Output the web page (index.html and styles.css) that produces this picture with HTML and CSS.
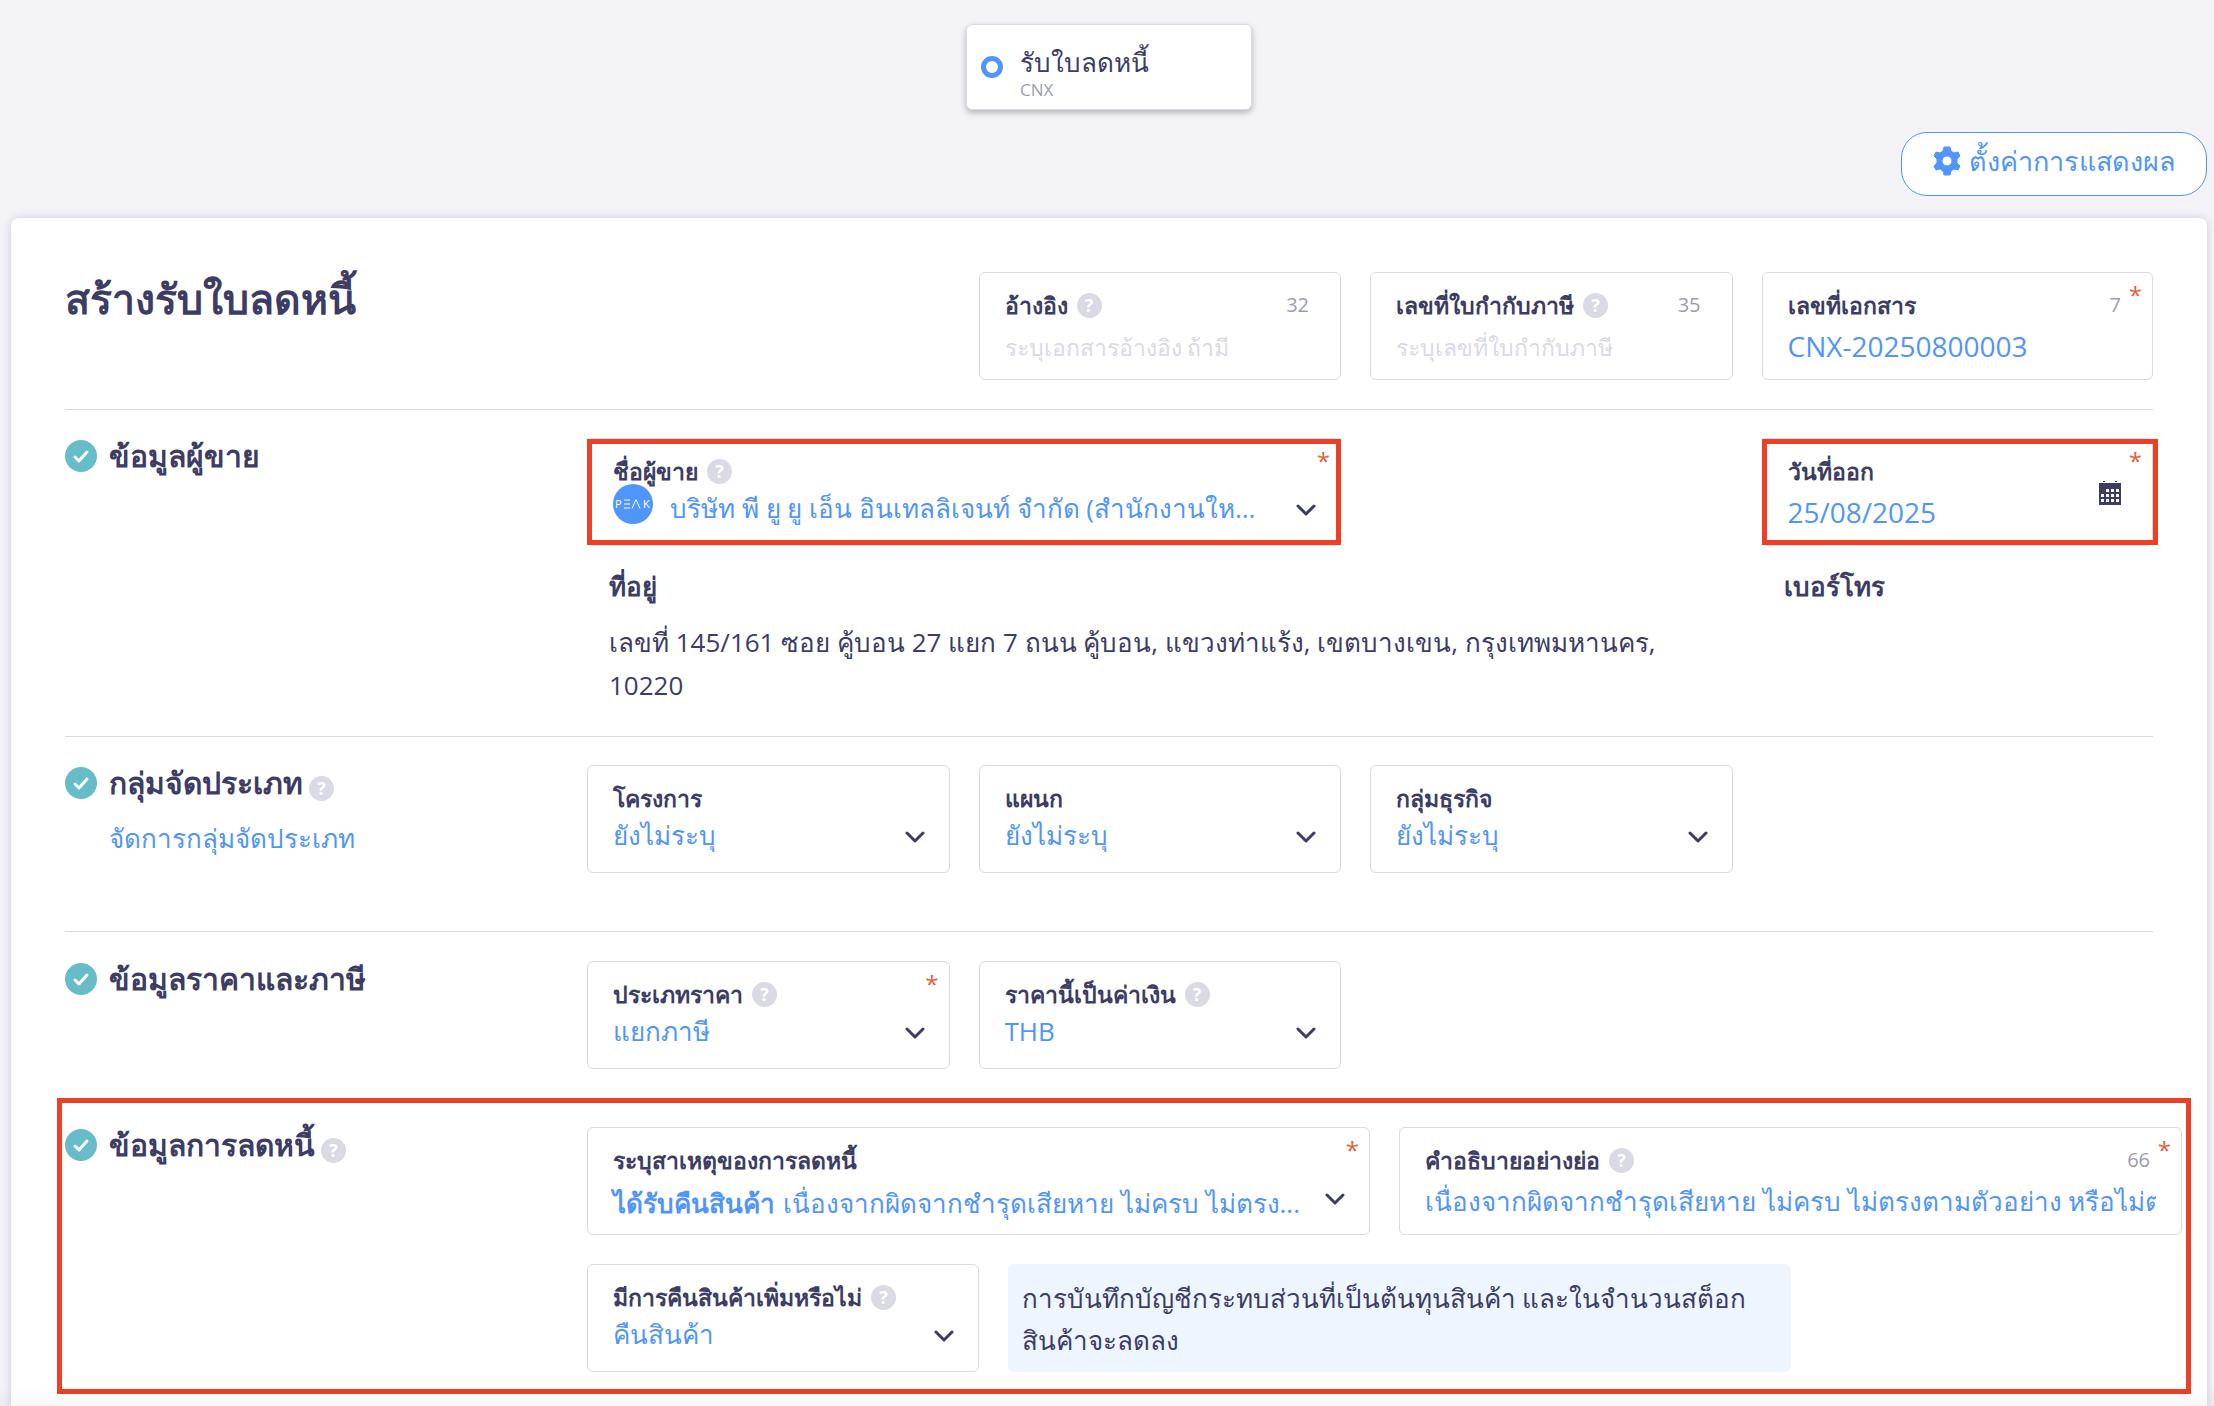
FILE: index.html
```html
<!DOCTYPE html>
<html lang="th">
<head>
  <meta charset="UTF-8" />
  <meta name="viewport" content="width=device-width, initial-scale=1.0" />
  <title>สร้างรับใบลดหนี้</title>
  <link rel="stylesheet" href="styles.css">
</head>
<body>
  <!-- shared icons -->
  <svg class="sprite" aria-hidden="true">
    <symbol id="chevron" viewBox="0 0 20 12"><path d="M2 2 L10 10 L18 2" fill="none" stroke="currentColor" stroke-width="3" stroke-linecap="round" stroke-linejoin="round"/></symbol>
    <symbol id="check" viewBox="0 0 32 32"><circle cx="16" cy="16" r="16" fill="#66bcc9"/><path d="M10 17 L14 21 L22 12" fill="none" stroke="#fff" stroke-width="3" stroke-linecap="round" stroke-linejoin="round"/></symbol>
  </svg>

  <header class="flow">
    <div class="flow-card">
      <span class="flow-dot"></span>
      <div class="flow-text">
        <div class="flow-name">รับใบลดหนี้</div>
        <div class="flow-code">CNX</div>
      </div>
    </div>
  </header>

  <div class="toolbar">
    <button type="button" class="btn-setting">
      <svg width="28" height="30" viewBox="0 0 28 30"><path fill="currentColor" stroke="currentColor" stroke-linejoin="round" fill-rule="evenodd" d="M11 1h6l1 4 3 2 4-1 2 4-3 3v4l3 3-2 4-4-1-3 2-1 4h-6l-1-4-3-2-4 1-2-4 3-3v-4l-3-3 2-4 4 1 3-2zM14 10a5 5 0 1 0 0 10a5 5 0 1 0 0-10z"/></svg>
      <span>ตั้งค่าการแสดงผล</span>
    </button>
  </div>

  <main class="panel">
    <section class="row">
      <h1 class="title">สร้างรับใบลดหนี้</h1>
      <div class="field">
        <div class="field-head"><label for="ref">อ้างอิง</label><button type="button" class="help">?</button><span class="count">32</span></div>
        <input type="text" id="ref" placeholder="ระบุเอกสารอ้างอิง ถ้ามี" />
      </div>
      <div class="field">
        <div class="field-head"><label for="tax">เลขที่ใบกำกับภาษี</label><button type="button" class="help">?</button><span class="count">35</span></div>
        <input type="text" id="tax" placeholder="ระบุเลขที่ใบกำกับภาษี" />
      </div>
      <div class="field last">
        <div class="field-head"><label for="doc">เลขที่เอกสาร</label><span class="count">7</span></div>
        <input type="text" id="doc" class="latin" value="CNX-20250800003" />
        <span class="star">*</span>
      </div>
    </section>

    <section class="row">
      <h2><svg class="check"><use href="#check"/></svg>ข้อมูลผู้ขาย</h2>
      <div class="field wide marked">
        <div class="field-head"><label for="seller">ชื่อผู้ขาย</label><button type="button" class="help">?</button></div>
        <div class="value-line seller">
          <svg class="logo" viewBox="0 0 40 40"><circle cx="20" cy="20" r="20" fill="#5096fa"/><text x="2" y="24" class="logo-text">P</text><path d="M11 16h6M11 20h6M11 24h6M19 24.500l4-9l4 9" fill="none" stroke="#fff"/><text x="30" y="24" class="logo-text">K</text></svg>
          <select id="seller"><option>บริษัท พี ยู ยู เอ็น อินเทลลิเจนท์ จำกัด (สำนักงานให...</option></select>
        </div>
        <svg class="chevron"><use href="#chevron"/></svg>
        <span class="star">*</span>
      </div>
      <div class="field date marked last">
        <div class="field-head"><label for="issued">วันที่ออก</label></div>
        <input type="text" id="issued" class="latin" value="25/08/2025" />
        <svg class="calendar" viewBox="0 0 22 24"><path fill="currentColor" fill-rule="evenodd" d="M4 0h2v1h-2zM16 0h2v1h-2zM0 2h22v22h-22zM7 8h3v3h-3zM12 8h3v3h-3zM17 8h3v3h-3zM2 13h3v3h-3zM7 13h3v3h-3zM12 13h3v3h-3zM17 13h3v3h-3zM2 18h3v3h-3zM7 18h3v3h-3zM12 18h3v3h-3zM17 18h3v3h-3z"/></svg>
        <span class="star">*</span>
      </div>
      <div class="info address">
        <h3>ที่อยู่</h3>
        <p>เลขที่ 145/161 ซอย คู้บอน 27 แยก 7 ถนน คู้บอน, แขวงท่าแร้ง, เขตบางเขน, กรุงเทพมหานคร,<br>10220</p>
      </div>
      <div class="info">
        <h3>เบอร์โทร</h3>
      </div>
    </section>

    <section class="row spaced">
      <div>
        <h2><svg class="check"><use href="#check"/></svg>กลุ่มจัดประเภท<button type="button" class="help">?</button></h2>
        <a href="#" class="manage">จัดการกลุ่มจัดประเภท</a>
      </div>
      <div class="field">
        <div class="field-head"><label for="project">โครงการ</label></div>
        <select id="project"><option>ยังไม่ระบุ</option></select>
        <svg class="chevron"><use href="#chevron"/></svg>
      </div>
      <div class="field">
        <div class="field-head"><label for="dept">แผนก</label></div>
        <select id="dept"><option>ยังไม่ระบุ</option></select>
        <svg class="chevron"><use href="#chevron"/></svg>
      </div>
      <div class="field">
        <div class="field-head"><label for="biz">กลุ่มธุรกิจ</label></div>
        <select id="biz"><option>ยังไม่ระบุ</option></select>
        <svg class="chevron"><use href="#chevron"/></svg>
      </div>
    </section>

    <section class="row plain">
      <h2><svg class="check"><use href="#check"/></svg>ข้อมูลราคาและภาษี</h2>
      <div class="field">
        <div class="field-head"><label for="price">ประเภทราคา</label><button type="button" class="help">?</button></div>
        <select id="price"><option>แยกภาษี</option></select>
        <svg class="chevron"><use href="#chevron"/></svg>
        <span class="star">*</span>
      </div>
      <div class="field">
        <div class="field-head"><label for="currency">ราคานี้เป็นค่าเงิน</label><button type="button" class="help">?</button></div>
        <select id="currency"><option>THB</option></select>
        <svg class="chevron"><use href="#chevron"/></svg>
      </div>
    </section>

    <section class="row plain credit">
      <h2><svg class="check"><use href="#check"/></svg>ข้อมูลการลดหนี้<button type="button" class="help">?</button></h2>
      <div class="credit-fields">
        <div class="field">
          <div class="field-head"><label for="reason">ระบุสาเหตุของการลดหนี้</label></div>
          <div class="value-line">
            <b>ได้รับคืนสินค้า</b>
            <select id="reason"><option>เนื่องจากผิดจากชำรุดเสียหาย ไม่ครบ ไม่ตรง...</option></select>
          </div>
          <svg class="chevron"><use href="#chevron"/></svg>
          <span class="star">*</span>
        </div>
        <div class="field">
          <div class="field-head"><label for="desc">คำอธิบายอย่างย่อ</label><button type="button" class="help">?</button><span class="count">66</span></div>
          <input type="text" id="desc" value="เนื่องจากผิดจากชำรุดเสียหาย ไม่ครบ ไม่ตรงตามตัวอย่าง หรือไม่ตรงตามที่ตกลง" />
          <span class="star">*</span>
        </div>
        <div class="field half">
          <div class="field-head"><label for="back">มีการคืนสินค้าเพิ่มหรือไม่</label><button type="button" class="help">?</button></div>
          <select id="back"><option>คืนสินค้า</option></select>
          <svg class="chevron"><use href="#chevron"/></svg>
        </div>
        <p class="note">การบันทึกบัญชีกระทบส่วนที่เป็นต้นทุนสินค้า และในจำนวนสต็อก<br>สินค้าจะลดลง</p>
      </div>
    </section>
  </main>
</body>
</html>
```
FILE: styles.css
```css
* {
  box-sizing: border-box;
}
body {
  margin: 0;
  padding: 24px 7px 0 11px;
  background: #f3f3f8;
  color: #3c3c64;
  font-family: "Open Sans", "Noto Sans", sans-serif;
  font-weight: 400;
  font-size: 26px;
  line-height: 42px;
}
body::after {
  content: "";
  position: fixed;
  left: 0;
  right: 0;
  bottom: 0;
  height: 18px;
  background: linear-gradient(transparent, rgba(0,0,0,0.03));
  pointer-events: none;
}
h1, h2, h3, p {
  margin: 0;
}
input, select, button {
  font: inherit;
  color: inherit;
  padding: 0;
  border: 0;
  background: none;
}
.sprite {
  position: absolute;
  width: 0;
  height: 0;
}

/* top */
.flow {
  display: flex;
  justify-content: center;
}
.flow-card {
  display: flex;
  align-items: center;
  gap: 17px;
  width: 286px;
  height: 86px;
  padding: 0 14px;
  background: white;
  border: 1px solid #dadae5;
  border-radius: 6px;
  box-shadow: 0 3px 6px rgba(0,0,0,0.25);
}
.flow-dot {
  width: 22px;
  height: 22px;
  border: 5px solid #5096fa;
  border-radius: 50%;
}
.flow-text {
  padding-top: 10px;
}
.flow-name {
  line-height: 36px;
}
.flow-code {
  font-size: 17px;
  line-height: 20px;
  color: #9c9cb0;
}
.toolbar {
  display: flex;
  justify-content: flex-end;
  margin: 22px 0;
}
.btn-setting {
  display: flex;
  align-items: center;
  justify-content: center;
  gap: 8px;
  width: 306px;
  height: 64px;
  padding-bottom: 7px;
  border: 1px solid #5096fa;
  border-radius: 26px;
  background: white;
  color: #5096fa;
  font-size: 27px;
  cursor: pointer;
}

/* form */
.panel {
  min-height: calc(100vh - 218px);
  padding: 54px 54px 12px;
  background: white;
  border-radius: 8px 8px 0 0;
  box-shadow: 0 0 10px rgba(60,60,100,0.2);
}
.row {
  display: grid;
  grid-template-columns: 25% repeat(4, minmax(0, 1fr));
  padding-bottom: 29px;
  margin-bottom: 28px;
  border-bottom: 1px solid #dadae5;
}
.row.spaced {
  padding-bottom: 58px;
  margin-bottom: 29px;
}
.row.plain {
  border: 0;
  margin-bottom: 0;
}
.title {
  grid-column: span 2;
  font-size: 41px;
  font-weight: 600;
  line-height: 52px;
}
h2 {
  display: flex;
  align-items: center;
  height: 36px;
  font-size: 30px;
  font-weight: 600;
}
.check {
  width: 32px;
  height: 32px;
  margin-right: 12px;
}
.manage {
  display: block;
  margin: 16px 0 0 44px;
  color: #5096fa;
  text-decoration: none;
}

.field {
  position: relative;
  height: 108px;
  margin-right: 29px;
  padding: 11px 25px;
  border: 1px solid #dadae5;
  border-radius: 6px;
}
.field.wide {
  grid-column: span 2;
}
.field.last {
  margin-right: 0;
}
.field.date {
  grid-column: 5;
}
.field-head {
  display: flex;
  align-items: center;
}
.field-head label {
  font-size: 23px;
  font-weight: 600;
}
.help {
  width: 25px;
  height: 25px;
  margin-left: 9px;
  border-radius: 50%;
  background: #dadae5;
  color: white;
  font-size: 18px;
  font-weight: 700;
  line-height: 25px;
}
h2 .help {
  margin: 10px 0 0 6px;
}
.count {
  margin: 0 6px 0 auto;
  font-size: 20px;
  color: #9c9cb0;
}
.field input, .field select {
  display: block;
  width: 100%;
  appearance: none;
  outline: none;
  color: #5096fa;
}
.field input {
  height: 40px;
}
.field select {
  height: 44px;
  margin-top: -6px;
}
.field .latin {
  font-size: 28px;
}
.field input::placeholder {
  color: #dadae5;
  font-size: 23px;
}
.value-line {
  display: flex;
  align-items: center;
  color: #5096fa;
  white-space: nowrap;
}
.value-line.seller {
  align-items: flex-start;
}
.value-line select {
  flex: 1;
  min-width: 0;
}
.value-line:not(.seller) select {
  margin-top: 0;
}
.value-line b {
  font-weight: 600;
  margin-right: 8px;
}
.logo {
  flex: none;
  width: 40px;
  height: 40px;
  margin: -8px 17px 0 0;
}
.logo-text {
  fill: white;
  font-size: 11px;
}
.star {
  position: absolute;
  top: 6px;
  right: 10px;
  font-size: 24px;
  line-height: 32px;
  color: #e0603c;
}
.chevron {
  position: absolute;
  top: 65px;
  right: 24px;
  width: 20px;
  height: 12px;
  pointer-events: none;
}
.calendar {
  position: absolute;
  top: 42px;
  right: 31px;
  width: 22px;
  height: 24px;
}

/* red frames */
.marked::after, .credit::after {
  content: "";
  position: absolute;
  inset: 0 -1px;
  border: 5px solid #eb4026;
  pointer-events: none;
}
.marked.date::after {
  right: -6px;
}
.credit::after {
  inset: -29px -38px -22px -8px;
}

.info {
  padding: 19px 0 0 22px;
}
.info.address {
  grid-column: 2 / span 3;
}
.info h3 {
  font-size: 26px;
  font-weight: 600;
}
.info p {
  margin-top: 14px;
  line-height: 43px;
}

.credit {
  position: relative;
  margin-top: 29px;
  padding-bottom: 0;
}
.credit-fields {
  grid-column: 2 / -1;
  display: grid;
  grid-template-columns: repeat(4, 25%);
  row-gap: 29px;
}
.credit-fields .field {
  grid-column: span 2;
  margin: 0;
}
.credit-fields .field.half {
  grid-column: span 1;
}
.credit-fields .field:nth-child(2) {
  margin: 0 -29px 0 29px;
}
.note {
  grid-column: span 2;
  height: 108px;
  margin: 0 -29px 0 29px;
  padding: 13px 14px;
  border-radius: 6px;
  background: #edf5ff;
}
```
